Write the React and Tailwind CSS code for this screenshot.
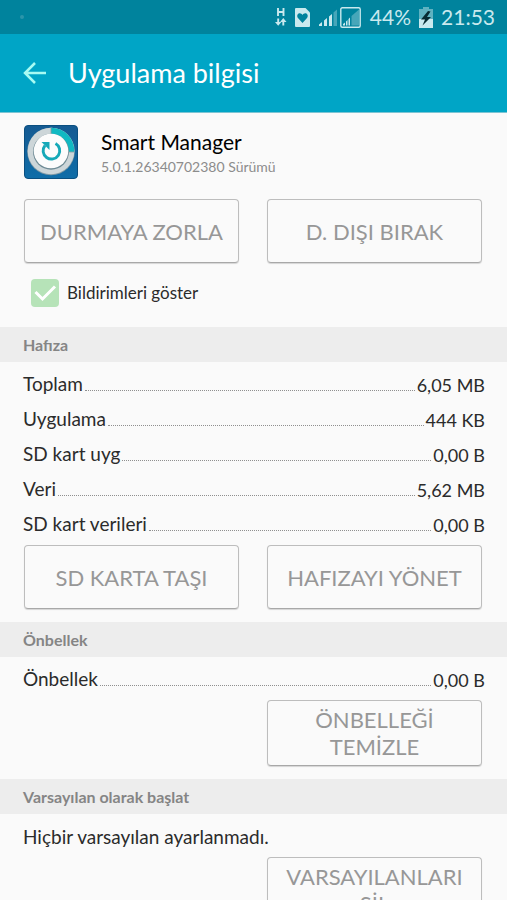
import React, { useState } from 'react';

const storageRows = [
  { label: 'Toplam', value: '6,05 MB' },
  { label: 'Uygulama', value: '444 KB' },
  { label: 'SD kart uyg', value: '0,00 B' },
  { label: 'Veri', value: '5,62 MB' },
  { label: 'SD kart verileri', value: '0,00 B' },
];

function StatusBar() {
  return (
    <div className="flex h-[34px] shrink-0 items-center bg-[#00839d] pl-5 pr-3 text-[#c9e9ee]">
      <span className="h-1 w-1 rounded-full bg-[#2b95aa]" />
      <div className="ml-auto flex items-center">
        {/* Mobile data */}
        <svg width="12" height="20" viewBox="0 0 12 20" fill="none" stroke="currentColor" strokeWidth="1.9">
          <path d="M3 1v8M8.500 1v8M3 5h5.500" />
          <path d="M3.200 11.500v5M8.300 18.500v-4" />
          <path d="M0 15h6.400L3.200 18.800zM5.100 15h6.400L8.300 11z" fill="currentColor" stroke="none" />
        </svg>
        {/* SIM card */}
        <svg className="ml-2" width="15" height="19" viewBox="0 0 15 19">
          <path d="M1 0h9.500L15 4.500V18a1 1 0 0 1-1 1H1a1 1 0 0 1-1-1V1a1 1 0 0 1 1-1z" fill="currentColor" />
          <path d="M7.500 15 3.200 10.300C1.200 8 2.600 5.300 4.700 5.300c1.300 0 2.200.7 2.800 1.700.6-1 1.500-1.700 2.800-1.700 2.100 0 3.500 2.700 1.500 5z" fill="#00839d" />
        </svg>
        {/* Signal of both SIMs */}
        <svg className="ml-2" width="44" height="21" viewBox="0 0 44 21" fill="currentColor">
          <path d="M1 19v-1.500l3-2.500v4zM6 19v-5.500l3-2.500v8zM11 19V9.500L14 7v12z" />
          <path d="M15.500 19V5.500L19 2.500V19z" opacity=".35" />
          <rect x="22.800" y=".8" width="19.400" height="19.400" rx="1.500" fill="none" stroke="currentColor" strokeWidth="1.400" />
          <path d="M25 18.500V17l2-1.500v3zM28 18.500v-4l1.500-1.500v5.500zM30.500 18.500v-6.500l1.500-1.500v8z" />
          <path d="M33.500 18.500V9L41 2.500v16z" opacity=".35" />
        </svg>
        <span className="ml-2 text-[21px] leading-6">44%</span>
        {/* Battery, charging */}
        <svg className="ml-2" width="14" height="21" viewBox="0 0 14 21">
          <path d="M4 0h6v2h4v19H0V2h4z" fill="#5fb2c1" />
          <path d="M0 12h14v9H0z" fill="currentColor" />
          <path d="M9 4 2 12.500h4L3.500 18.500 12 10H8l3.500-5.500z" fill="#062b33" />
        </svg>
        <span className="ml-2 text-[21px] leading-6">21:53</span>
      </div>
    </div>
  );
}

function AppIcon() {
  return (
    <svg className="h-[54px] w-[54px] shrink-0" viewBox="0 0 54 54">
      <defs>
        <linearGradient id="tile" x1="0" y1="0" x2="0" y2="1">
          <stop offset="0" stopColor="#155a92" />
          <stop offset="1" stopColor="#0f6da8" />
        </linearGradient>
      </defs>
      <rect x=".5" y=".5" width="53" height="53" rx="3.500" fill="url(#tile)" stroke="#0b4f80" />
      <circle cx="27" cy="26.500" r="23.800" fill="#7f99a5" />
      <circle cx="27" cy="26" r="23.300" fill="#cdd6d9" />
      <path d="M27 26V2.700A23.300 23.300 0 0 1 50.300 27H27z" fill="#11b9c2" />
      <path d="M27 2.700V10M43 27h7.300" stroke="#8a999f" strokeWidth=".8" />
      <circle cx="27" cy="26.700" r="18" fill="#6f8b95" />
      <circle cx="27" cy="26" r="17.300" fill="#fcfcfc" />
      <path d="M31.500 18.500A8.300 8.300 0 1 1 21 20.500" fill="none" stroke="#16a9b8" strokeWidth="2.900" />
      <path d="M17.500 17h8v8z" fill="#16a9b8" />
    </svg>
  );
}

function ActionButton({ children }) {
  return (
    <button
      type="button"
      className="min-h-16 w-full rounded border border-[#bdbdbd] border-b-[#a8a8a8] px-3 py-[5px] text-center text-[22px] leading-[27px] text-[#979797] shadow-[0_1px_1px_rgba(0,0,0,0.15)]"
    >
      {children}
    </button>
  );
}

function Section({ title, children }) {
  return (
    <section className="pb-[13px]">
      <h2 className="bg-[#ededed] pl-[23px] text-base leading-[35px] font-bold text-[#858585]">{title}</h2>
      <div className="pt-[5px]">{children}</div>
    </section>
  );
}

function SizeRow({ label, value }) {
  return (
    <div className="flex h-[35px] items-center gap-[2px] pl-[23px] pr-[22px] text-[#2b2b2b]">
      <dt className="text-[19px]">{label}</dt>
      <span className="mt-3 flex-1 border-b border-dotted border-[#8f8f8f]" />
      <dd className="text-lg">{value}</dd>
    </div>
  );
}

export default function App() {
  const [notifications, setNotifications] = useState(true);

  return (
    <div className="flex h-screen flex-col bg-[#fafafa] font-['Lato','Noto_Sans',sans-serif]">
      <StatusBar />

      {/* Title bar */}
      <header className="flex h-[79px] shrink-0 items-center gap-[22px] border-b border-[#7cc4d3] bg-[#00a5c6] pl-[23px]">
        <button type="button" aria-label="Geri" className="text-[#a8fbf3]">
          <svg width="23" height="22" viewBox="0 0 23 22" fill="none" stroke="currentColor" strokeWidth="2.500">
            <path d="M12 1 2 11l10 10M2 11h21" />
          </svg>
        </button>
        <h1 className="text-[27px] leading-9 text-white">Uygulama bilgisi</h1>
      </header>

      <main className="flex-1 overflow-y-auto [scrollbar-width:none]">
        <div className="flex items-center gap-[23px] pt-3 pl-6">
          <AppIcon />
          <div className="pt-[2px]">
            <div className="text-[21px] leading-7 text-black">Smart Manager</div>
            <div className="text-sm leading-[22px] text-[#8c8c8c]">5.0.1.26340702380 Sürümü</div>
          </div>
        </div>

        <div className="grid grid-cols-2 gap-7 pt-5 pl-6 pr-[25px]">
          <ActionButton>DURMAYA ZORLA</ActionButton>
          <ActionButton>D. DIŞI BIRAK</ActionButton>
        </div>

        <label className="mt-4 mb-5 ml-[31px] flex w-fit items-center gap-2 text-[17px] leading-7 text-[#2b2b2b]">
          <span className="grid h-7 w-7">
            <input
              type="checkbox"
              checked={notifications}
              onChange={(e) => setNotifications(e.target.checked)}
              className="col-start-1 row-start-1 h-7 w-7 appearance-none rounded-sm bg-[#b6e3b8]"
            />
            {notifications && (
              <svg className="pointer-events-none col-start-1 row-start-1" viewBox="0 0 28 28" fill="none" stroke="#fff" strokeWidth="3">
                <path d="m4.500 13 7 7L24 7.500" />
              </svg>
            )}
          </span>
          Bildirimleri göster
        </label>

        <Section title="Hafıza">
          <dl>
            {storageRows.map((row) => (
              <SizeRow key={row.label} label={row.label} value={row.value} />
            ))}
          </dl>
          <div className="grid grid-cols-2 gap-7 pt-[3px] pl-6 pr-[25px]">
            <ActionButton>SD KARTA TAŞI</ActionButton>
            <ActionButton>HAFIZAYI YÖNET</ActionButton>
          </div>
        </Section>

        <Section title="Önbellek">
          <dl>
            <SizeRow label="Önbellek" value="0,00 B" />
          </dl>
          <div className="grid grid-cols-2 gap-7 pt-[3px] pl-6 pr-[25px]">
            <div className="col-start-2">
              <ActionButton>
                ÖNBELLEĞİ
                <br />
                TEMİZLE
              </ActionButton>
            </div>
          </div>
        </Section>

        <Section title="Varsayılan olarak başlat">
          <p className="pl-[23px] text-[19px] leading-[35px] text-[#2b2b2b]">Hiçbir varsayılan ayarlanmadı.</p>
          <div className="grid grid-cols-2 gap-7 pt-[3px] pl-6 pr-[25px]">
            <div className="col-start-2">
              <ActionButton>
                VARSAYILANLARI
                <br />
                SİL
              </ActionButton>
            </div>
          </div>
        </Section>
      </main>
    </div>
  );
}
